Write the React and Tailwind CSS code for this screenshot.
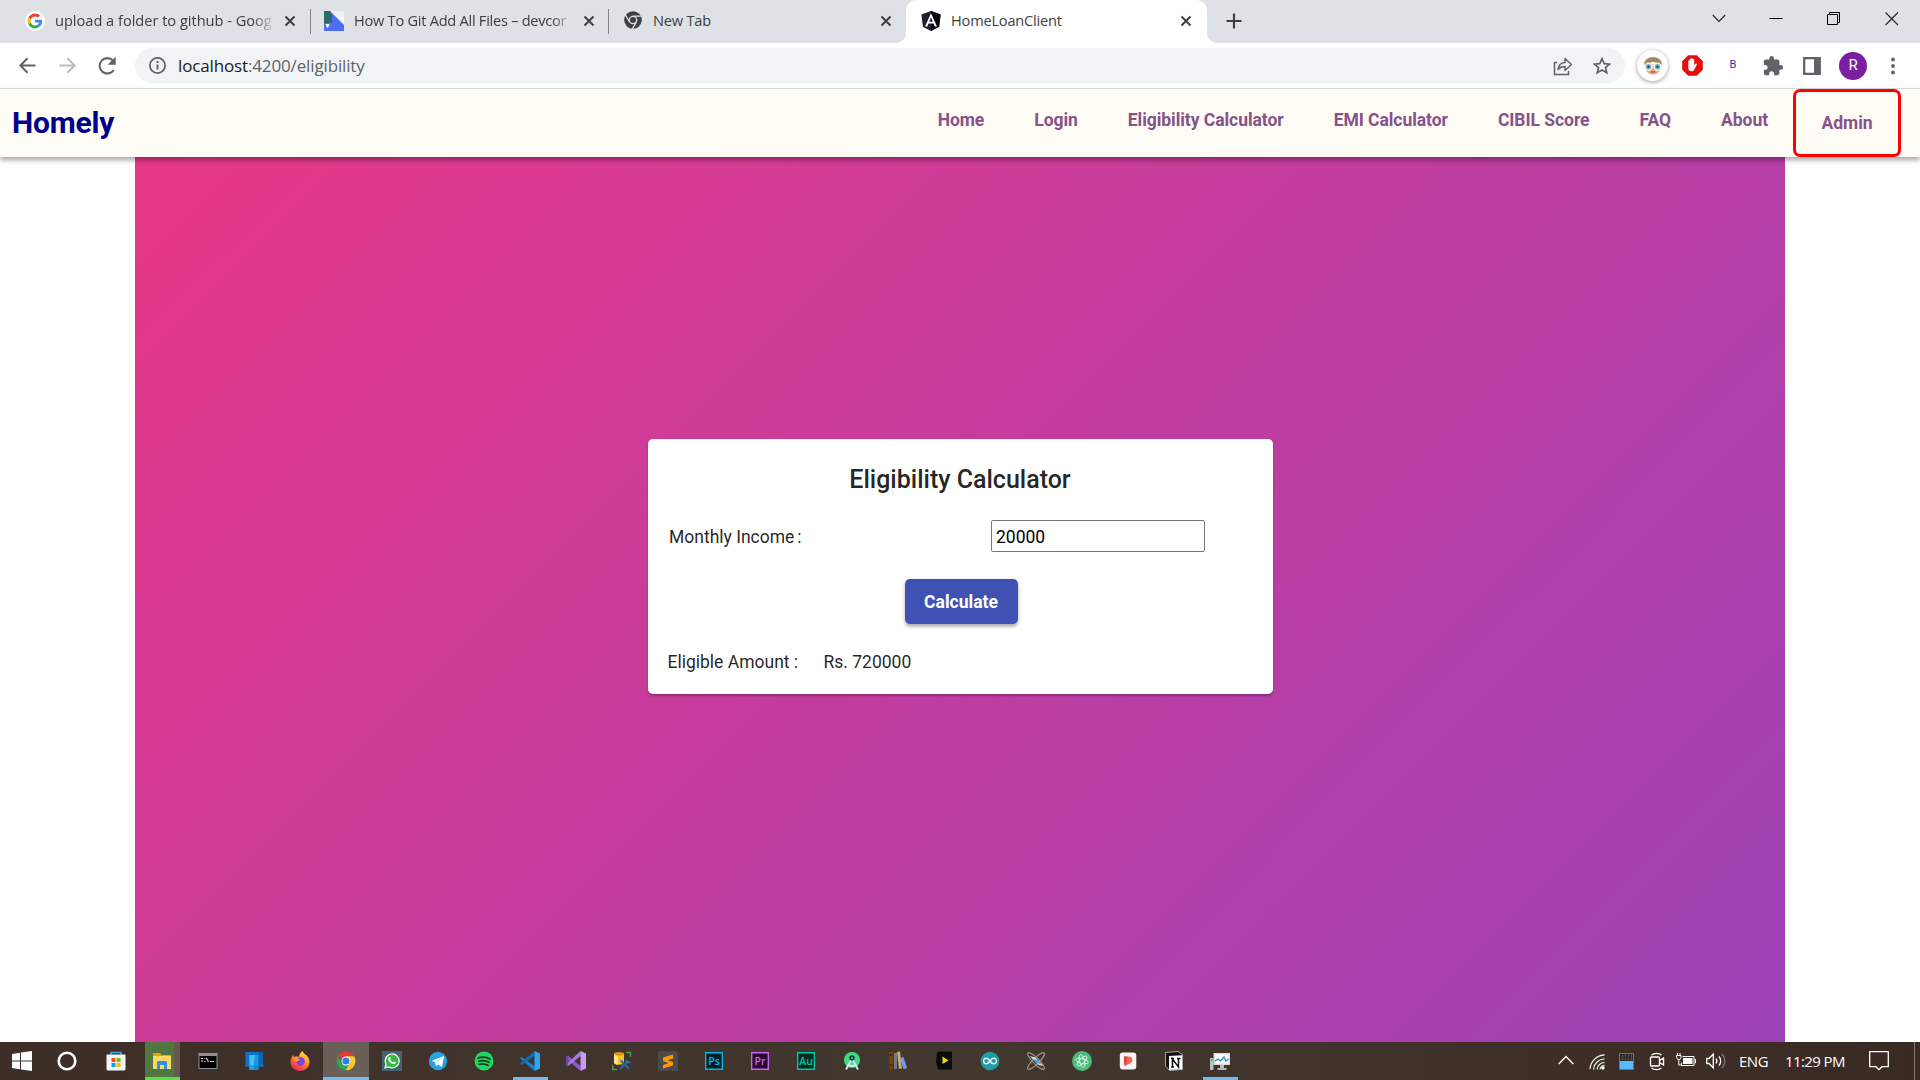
import React from "react";

const roboto = "font-[Roboto,sans-serif]";
const segoe = "font-['Open_Sans','Noto_Sans',sans-serif]";

function Svg({ w = 20, h = 20, vb, className = "", children, ...rest }) {
  return (
    <svg width={w} height={h} viewBox={vb || `0 0 ${w} ${h}`} fill="none" className={`shrink-0 ${className}`} {...rest}>
      {children}
    </svg>
  );
}

const CloseX = ({ className = "" }) => (
  <Svg w={12} h={12} className={className}>
    <path d="M1.5 1.5l9 9M10.5 1.5l-9 9" stroke="#3c4043" strokeWidth="2" />
  </Svg>
);

const GoogleG = () => (
  <Svg w={20} h={20}>
    <circle cx="10" cy="10" r="10" fill="#fff" />
    <g transform="translate(2.6 2.6) scale(.308)">
      <path fill="#EA4335" d="M24 9.5c3.54 0 6.71 1.22 9.21 3.6l6.85-6.85C35.9 2.38 30.47 0 24 0 14.62 0 6.51 5.38 2.56 13.22l7.98 6.19C12.43 13.72 17.74 9.5 24 9.5z" />
      <path fill="#4285F4" d="M46.98 24.55c0-1.57-.15-3.09-.38-4.55H24v9.02h12.94c-.58 2.96-2.26 5.48-4.78 7.18l7.73 6c4.51-4.18 7.09-10.36 7.09-17.65z" />
      <path fill="#FBBC05" d="M10.53 28.59c-.48-1.45-.76-2.99-.76-4.59s.27-3.14.76-4.59l-7.98-6.19C.92 16.46 0 20.12 0 24c0 3.88.92 7.54 2.56 10.78l7.97-6.19z" />
      <path fill="#34A853" d="M24 48c6.48 0 11.93-2.13 15.89-5.81l-7.73-6c-2.15 1.45-4.92 2.3-8.16 2.3-6.26 0-11.57-4.22-13.47-9.91l-7.98 6.19C6.51 42.62 14.62 48 24 48z" />
    </g>
  </Svg>
);

const DevFavicon = () => (
  <Svg w={20} h={20}>
    <path d="M0 0h20v20H0z" fill="#4c6ef5" />
    <path d="M6 0h14v14z" fill="#e9f3f1" />
    <path d="M14 6h6v5z" fill="#fff" />
    <path d="M0 0h6l2 4v8H0z" fill="#2b6b6b" />
    <path d="M1.5 13h4l-1 3-1 1-1-1z" fill="#fff" />
  </Svg>
);

const ChromeMono = () => (
  <Svg w={18} h={18}>
    <circle cx="9" cy="9" r="8.8" fill="#3c4043" />
    <circle cx="9" cy="9" r="3.7" fill="#3c4043" stroke="#dee1e6" strokeWidth="1.3" />
    <path d="M9 5.1h8.6M5.6 11L1.4 3.8M12.4 11L8.3 18" stroke="#dee1e6" strokeWidth="1.3" />
  </Svg>
);

const AngularIcon = () => (
  <Svg w={20} h={20}>
    <path d="M10 0l9.6 3.4-1.5 12.3L10 20l-8.1-4.3L.4 3.4z" fill="#1d1f2b" />
    <path d="M10 0l9.6 3.4-1.5 12.3L10 20z" fill="#05060d" />
    <path d="M10 2.2L4 15.6h2.3l1.2-3h5l1.2 3H16zm0 4.2l1.7 4.3H8.3z" fill="#fff" />
  </Svg>
);

function Tab({ icon, title, width, tracking, fade }) {
  return (
    <div className={`flex h-[43px] shrink-0 items-start pt-[11px] ${width}`}>
      <div className="flex w-5 justify-center">{icon}</div>
      <div className={`ml-[10px] h-5 w-[220px] whitespace-nowrap text-[14.6px] leading-[18px] text-[#3c4043] ${tracking} ${fade ? "[mask-image:linear-gradient(to_right,black_90%,transparent)]" : ""}`}>
        {title}
      </div>
      <CloseX className="mt-1 mr-[14px] ml-auto" />
    </div>
  );
}

function TabStrip() {
  return (
    <div className="flex h-[43px] bg-[#dee1e6] pl-[25px]">
      <Tab icon={<GoogleG />} title="upload a folder to github - Goog" width="w-[285px]" tracking="tracking-[-0.01px]" fade />
      <div className="mt-[9px] mr-[13px] h-[25px] w-px bg-[#808488]" />
      <Tab icon={<DevFavicon />} title="How To Git Add All Files – devcor" width="w-[285px]" tracking="tracking-[-0.26px]" fade />
      <div className="mt-[9px] mr-[14px] -ml-px h-[25px] w-px bg-[#808488]" />
      <Tab icon={<ChromeMono />} title="New Tab" width="w-[283px]" tracking="tracking-[-0.2px]" />
      <div className="-ml-[10px] h-[43px] w-[10px] bg-white">
        <div className="h-full rounded-br-[10px] bg-[#dee1e6]" />
      </div>
      <div className="w-[301px] rounded-t-[10px] bg-white pl-[15px]">
        <Tab icon={<AngularIcon />} title="HomeLoanClient" width="w-[285px]" tracking="tracking-[-0.2px]" />
      </div>
      <div className="h-[43px] w-[10px] bg-white">
        <div className="h-full rounded-bl-[10px] bg-[#dee1e6]" />
      </div>
      <Svg w={16} h={16} className="mt-[13px] ml-[9px]">
        <path d="M8 .5v15M.5 8h15" stroke="#3c4043" strokeWidth="2.2" />
      </Svg>
      <div className="mr-[21px] ml-auto flex items-start pt-3">
        <Svg w={14} h={14}><path d="M.8 3L7 9.500l6.200-6.500" stroke="#222" strokeWidth="1.1" /></Svg>
        <Svg w={14} h={14} className="ml-[43px]"><path d="M.5 6.500h13" stroke="#000" /></Svg>
        <Svg w={14} h={14} className="ml-11"><path d="M.5 2.500h10v10H.5zM2.500 2V.5h10v10H11" stroke="#000" /></Svg>
        <Svg w={14} h={14} className="ml-11"><path d="M.5 .5l12.500 12.500M13 .5L.5 13" stroke="#222" strokeWidth="1.1" /></Svg>
      </div>
    </div>
  );
}

function Toolbar() {
  return (
    <div className="flex h-[46px] items-center border-b border-[#d8dade] bg-white pr-[23px] pl-[19px]">
      <Svg w={17} h={17}><path d="M16.500 8.500H1.500M8.500 1.200L1.300 8.500l7.200 7.300" stroke="#5f6368" strokeWidth="2" /></Svg>
      <Svg w={17} h={17} className="ml-[23px]"><path d="M.5 8.500h15M8.500 1.200l7.200 7.300-7.200 7.300" stroke="#babcbe" strokeWidth="2" /></Svg>
      <Svg w={19} h={20} className="ml-[22px]">
        <path d="M15.800 14A7.700 7.700 0 1 1 15 4.600" stroke="#5f6368" strokeWidth="2.100" />
        <path d="M17.700 .7v8h-8z" fill="#5f6368" />
      </Svg>
      <div className="ml-[18px] flex h-[35px] w-[1490px] items-center rounded-full bg-[#f1f3f4] pr-[14px] pl-[14px]">
        <Svg w={17} h={17}>
          <circle cx="8.500" cy="8.500" r="7.600" stroke="#5f6368" strokeWidth="1.700" />
          <path d="M8.500 7.500v5M8.500 4v2" stroke="#5f6368" strokeWidth="1.900" />
        </Svg>
        <div className="ml-3 text-[17px] leading-6 tracking-[-0.14px] text-[#5f6368]">
          <span className="text-[#202124]">localhost</span>:4200/eligibility
        </div>
        <Svg w={20} h={20} className="ml-auto">
          <path d="M4 6.500H1.500v12h14V15" stroke="#5f6368" strokeWidth="1.500" />
          <path d="M5 13.500c.5-4.500 3-6.700 7-7V2.500l6.500 6-6.500 6v-4c-3 0-5.200.8-7 3z" stroke="#5f6368" strokeWidth="1.500" strokeLinejoin="round" />
        </Svg>
        <Svg w={18} h={18} className="ml-[20px]">
          <path d="M9 1.700l2.200 4.900 5.400.5-4.100 3.500 1.300 5.200L9 13l-4.800 2.800 1.300-5.200-4.100-3.500 5.400-.5z" stroke="#5f6368" strokeWidth="1.700" />
        </Svg>
      </div>
      <div className="ml-[12px] flex size-[31px] items-center justify-center rounded-full bg-white shadow-[0_1px_4px_rgba(0,0,0,0.4)]">
        <Svg w={20} h={20}>
          <path d="M1.500 8h17c0 6-3.500 10.500-8.500 10.500S1.500 14 1.500 8z" fill="#e5a47c" />
          <path d="M1 9C1 4 5 1 10 1s9 3 9 8l-3-1.500C12 7.500 11 5 9 6 6 7.500 4 8 1 9z" fill="#a8875c" />
          <path d="M0 9.500h20" stroke="#fff" strokeWidth="1.500" />
          <circle cx="5.500" cy="10.800" r="3.500" fill="#7db3c6" stroke="#eef4f6" strokeWidth="1.400" />
          <circle cx="14.500" cy="10.800" r="3.500" fill="#7db3c6" stroke="#eef4f6" strokeWidth="1.400" />
          <circle cx="5.500" cy="10.800" r="1.200" fill="#234a5a" /><circle cx="14.500" cy="10.800" r="1.200" fill="#234a5a" />
          <path d="M8 16h4" stroke="#a8503f" strokeWidth="1.200" />
        </Svg>
      </div>
      <Svg w={21} h={21} className="ml-[14px]">
        <path d="M6.200 .2h8.600l6 6v8.600l-6 6H6.200l-6-6V6.200z" fill="#e80c0c" />
        <path d="M6.300 11V6.300c0-1 1.300-1 1.300 0V4.500c0-1 1.500-1 1.500 0V3.700c0-1 1.600-1 1.600 0v.8c0-1 1.500-1 1.500 0v5.800l1.200-1.500c.9-.8 1.900 0 1.400.9l-2.600 5c-1.400 2.600-5.900 2-5.900-1.700z" fill="#fff" />
      </Svg>
      <div className={`ml-[21px] w-[18px] text-center text-[11px] text-[#2d2dbb] ${roboto}`}>B</div>
      <Svg w={22} h={22} vb="0 0 24 24" className="ml-[20px]">
        <path fill="#5f6368" d="M20.500 11H19V7c0-1.100-.9-2-2-2h-4V3.500a2.500 2.500 0 0 0-5 0V5H4c-1.100 0-1.990.9-1.990 2v3.800H3.500c1.490 0 2.700 1.210 2.700 2.700s-1.210 2.700-2.700 2.700H2V20c0 1.100.9 2 2 2h3.800v-1.500c0-1.490 1.210-2.700 2.700-2.700s2.700 1.210 2.700 2.700V22H17c1.100 0 2-.9 2-2v-4h1.500a2.500 2.500 0 0 0 0-5z" />
      </Svg>
      <Svg w={18} h={18} className="ml-[19px]">
        <path d="M1.200 1.200h15.600v15.600H1.200z" stroke="#5f6368" strokeWidth="2.200" />
        <path d="M11 1h6v16h-6z" fill="#5f6368" />
      </Svg>
      <div className={`ml-[18px] flex size-7 shrink-0 items-center justify-center rounded-full bg-[#7b1fa2] text-[15px] text-white ${roboto}`}>R</div>
      <Svg w={4} h={18} className="mr-[2px] ml-auto">
        <circle cx="2" cy="2.500" r="1.900" fill="#5f6368" /><circle cx="2" cy="9" r="1.900" fill="#5f6368" /><circle cx="2" cy="15.500" r="1.900" fill="#5f6368" />
      </Svg>
    </div>
  );
}

const navLinks = ["Home", "Login", "Eligibility Calculator", "EMI Calculator", "CIBIL Score", "FAQ", "About"];

function SiteNav() {
  return (
    <nav className={`relative z-10 flex h-[68px] bg-[#fffbf5] pr-[19px] pl-3 shadow-[0_3px_5px_rgba(0,0,0,0.35)] ${roboto}`}>
      <div className="pt-[14px] text-[30px] leading-10 font-bold tracking-[-0.2px] text-[#00008b]">Homely</div>
      <div className="ml-auto flex text-[17.5px] font-bold tracking-[-0.05px] text-[#865389]">
        {navLinks.map((label) => (
          <a key={label} className="px-[25px] pt-5 leading-[22px]">{label}</a>
        ))}
        <a className="flex h-[68px] w-[108px] justify-center rounded-[7px] border-[3px] border-[#ff0000] pt-5 leading-[22px]">Admin</a>
      </div>
    </nav>
  );
}

function EligibilityCard() {
  return (
    <div className="flex h-[255px] w-[625px] flex-col rounded-[5px] bg-white px-5 pt-5 text-[17.5px] text-black/87 shadow-[0_2px_2px_rgba(0,0,0,0.25)]">
      <h1 className="mt-1 text-center text-[25px] leading-[34px] font-medium">Eligibility Calculator</h1>
      <div className="mt-[23px] flex h-8 items-center">
        <label className="w-[323px] pt-0.5 pl-[1.5px]">Monthly Income<span className="ml-[3px]">:</span></label>
        <input readOnly value="20000" className="h-8 w-[214px] rounded-[2px] border border-[#767676] bg-white pt-0.5 pr-1 pl-[4.5px] text-black outline-none" />
      </div>
      <button className="mt-[27px] h-[45px] w-[113px] translate-x-px self-center rounded-[5px] bg-[#3f51b5] pt-0.5 font-bold tracking-[0.02px] text-white shadow-[0_3px_3px_rgba(0,0,0,0.22),0_1px_5px_rgba(0,0,0,0.15)]">Calculate</button>
      <div className="mt-[26px] flex leading-[24px]">
        <span className="w-[156px]">Eligible Amount :</span>
        <span>Rs. 720000</span>
      </div>
    </div>
  );
}

const AdobeIcon = ({ text, fg, bg }) => (
  <Svg w={18} h={18}>
    <path d="M.7 .7h16.600v16.600H.7z" fill={bg} stroke={fg} strokeWidth="1.400" />
    <text x="9" y="12.800" textAnchor="middle" fontFamily="Open Sans" fontSize="10.500" fontWeight="600" fill={fg}>{text}</text>
  </Svg>
);

const icons = {
  explorer: (
    <Svg>
      <path d="M1 2h7l1.500 2H19v4H1z" fill="#e59f12" />
      <path d="M1 5h18v13H1z" fill="#ffd766" />
      <path d="M5 18v-7a1 1 0 0 1 1-1h8a1 1 0 0 1 1 1v7h-3v-4H8v4z" fill="#2f8fe0" />
    </Svg>
  ),
  cmd: (
    <Svg>
      <path d="M.5 2h19v16H.5z" fill="#8f9294" />
      <path d="M1.500 5h17v12h-17z" fill="#000" />
      <path d="M3 7.500h2M3 10h2M7 7v1M7 10v1M8.500 7l2 4M12 10.500h4" stroke="#ddd" strokeWidth="1.100" />
    </Svg>
  ),
  laptop: (
    <Svg>
      <path d="M1.500 1h17.500v12.500l1 2H.5l1-2z" fill="#0f76c9" />
      <path d="M14 1h5v12.500h-5z" fill="#0b62ae" />
      <path d="M5.500 4h9v15h-9z" fill="#1b96e0" /><path d="M5.500 4h5.500l-1 6v9H5.500z" fill="#3fc0f5" />
      <path d="M5.500 14h9v5h-9z" fill="#0a86d0" opacity=".55" />
    </Svg>
  ),
  firefox: (
    <Svg>
      <defs>
        <linearGradient id="ff" x1="16" y1="1" x2="5" y2="19" gradientUnits="userSpaceOnUse">
          <stop stopColor="#ffe24a" /><stop offset=".45" stopColor="#ff8a22" /><stop offset="1" stopColor="#ef2155" />
        </linearGradient>
      </defs>
      <path d="M3 4l1 2c2-1 4-1 5 0 0-3 2-5 3.500-6 .5 3 6.500 4 7 10.500C19.500 16 15.500 20 10 20S.5 16 .5 11C.5 8 2 5.500 3 4z" fill="url(#ff)" />
      <circle cx="10.500" cy="10.500" r="4.300" fill="#7a44d8" />
      <path d="M3.500 7c3-.7 5 .8 7 1.500-1.500 1.300-3 1-4 2.500-1 0-2.500-2-3-4z" fill="#ff9a2a" />
    </Svg>
  ),
  chrome: (
    <Svg>
      <path d="M10 10L1.900 5.300A9.300 9.300 0 0 1 18.100 5.300H10z" fill="#e33b2e" />
      <path d="M10 10l-4.100 2.400L1.900 5.300A9.300 9.300 0 0 0 9.500 19.300L13.600 12z" fill="#2da94f" />
      <path d="M10 5.300h8.100A9.300 9.300 0 0 1 9.500 19.300L14 12z" fill="#fdc727" />
      <circle cx="10" cy="10" r="4.500" fill="#fff" /><circle cx="10" cy="10" r="3.600" fill="#2f7cf0" />
    </Svg>
  ),
  whatsapp: (
    <Svg>
      <path d="M0 0h20v20H0z" fill="#47626d" />
      <path d="M3 17l1-3.700A7 7 0 1 1 6.700 16z" fill="#35b944" stroke="#fff" strokeWidth="1.200" />
      <path d="M7 6.200c.8-.8 1.500.1 1.800 1.400l-.7 1c.8 1.500 1.600 2.200 3 2.800l1-1c1.600.5 2.100 1 1.400 1.900-1.700 1.700-4 .5-5.600-1.200C6.200 9.300 5.700 7.700 7 6.200z" fill="#fff" />
    </Svg>
  ),
  telegram: (
    <Svg>
      <circle cx="10" cy="10" r="9.200" fill="#2aa1da" />
      <path d="M3.800 9.800l11.400-4.500c.6-.2 1 .1.800.8l-1.900 9c-.1.600-.6.800-1.100.4l-2.900-2.100-1.500 1.400c-.5.300-.8.100-.9-.4l-.7-3z" fill="#fff" />
      <path d="M7.500 12l6-5" stroke="#9ccbe4" />
    </Svg>
  ),
  spotify: (
    <Svg>
      <circle cx="10" cy="10" r="9.500" fill="#1ed760" />
      <path d="M4 7c4.500-1.300 8.500-1 12 1M4.700 10.300c3.500-1 7-.7 10.200 1M5.300 13.300c3-.8 6-.5 8.700 1" stroke="#16301e" strokeWidth="1.700" strokeLinecap="round" />
    </Svg>
  ),
  vscode: (
    <Svg>
      <path d="M1.500 6L0 7.200 14.500 20V15z" fill="#0f86d2" />
      <path d="M1.500 14L0 12.800 14.500 0v5z" fill="#0870b5" />
      <path d="M14.500 0L20 2.500v15L14.500 20z" fill="#29a9f4" />
    </Svg>
  ),
  vstudio: (
    <Svg>
      <path d="M0 5.500L2 4.700 14.500 15v5L2.500 9.500V12l-2.500 2z" fill="#8a5bc8" />
      <path d="M0 14.500l2 .8L14.500 5V0L4 9.700 0 14.500z" fill="#a779df" />
      <path d="M0 5.500L2.200 4.700v10.600L0 14.500z" fill="#6b469f" />
      <path d="M14.500 0L20 2.500v15L14.500 20z" fill="#c79cf8" />
    </Svg>
  ),
  sql: (
    <Svg>
      <path d="M2 2.500v9c0 3 10 3 10 0v-9z" fill="#f8c320" /><path d="M2 2.500v9c0 1.500 2 2 4 2.200V3z" fill="#ffe680" />
      <ellipse cx="7" cy="2.800" rx="5" ry="1.900" fill="#e0951d" />
      <path d="M14 1.500h4.500V6M.8 14v4.500H5" stroke="#4a9b45" strokeWidth="1.500" />
      <path d="M8 18l8-8M9.500 10.500l7.500 7" stroke="#2468a8" strokeWidth="2.200" />
      <path d="M14 9.500l2 2 2.500-.5M8 10l3 0" stroke="#2d7abd" strokeWidth="1.700" />
    </Svg>
  ),
  sublime: (
    <Svg>
      <rect width="20" height="20" rx="1.500" fill="#4b4b4b" />
      <path d="M5 6.500l10-3v4l-5.500 1.700L15 11v3.500l-10 3V14l5.500-2L5 10z" fill="#ff9800" />
    </Svg>
  ),
  ps: <AdobeIcon text="Ps" fg="#00b8e6" bg="#001d26" />,
  pr: <AdobeIcon text="Pr" fg="#c268e8" bg="#2a0634" />,
  au: <AdobeIcon text="Au" fg="#00c8a0" bg="#002b24" />,
  android: (
    <Svg>
      <circle cx="10" cy="9" r="8" fill="#3ddc84" />
      <circle cx="10" cy="7" r="2.700" fill="#17333f" /><circle cx="10" cy="7" r="1" fill="#3ddc84" />
      <path d="M9 9.500L4 18.500M11 9.500l5 9M5.500 13.500c3 2 6 2 9 0" stroke="#dbe8f0" strokeWidth="1.900" />
    </Svg>
  ),
  books: (
    <Svg>
      <path d="M1 1h4v17H1z" fill="#7a3f12" /><path d="M1 4h4M1 14h4" stroke="#3d1d05" />
      <path d="M6 2h3v16H6z" fill="#66808a" /><path d="M9 1l3-.5 2 17-3 .5z" fill="#d3a862" />
      <path d="M12 7l3.500-1 3.500 11-3.500 1.200z" fill="#6d9bef" />
    </Svg>
  ),
  player: (
    <Svg>
      <path d="M3 2l2-1.500h13v18H4L3 14 2 11z" fill="#0b0b0b" />
      <path d="M8.500 5.500l6 4-6 3.500z" fill="#f1dc00" />
    </Svg>
  ),
  arduino: (
    <Svg>
      <circle cx="10" cy="10" r="9.300" fill="#1f9ca4" />
      <path d="M10 10C8.500 7.800 7.500 7.200 6.300 7.200a2.800 2.800 0 1 0 0 5.600C7.500 12.800 8.500 12.200 10 10s2.500-2.800 3.700-2.800a2.800 2.800 0 1 1 0 5.600C12.500 12.800 11.500 12.200 10 10z" stroke="#e6f5f5" strokeWidth="1.500" />
    </Svg>
  ),
  orbit: (
    <Svg>
      <ellipse cx="10" cy="10" rx="11.500" ry="3" transform="rotate(45 10 10)" stroke="#9b9287" strokeWidth="1.200" />
      <ellipse cx="10" cy="10" rx="11.500" ry="3" transform="rotate(-45 10 10)" stroke="#9b9287" strokeWidth="1.200" />
      <path d="M3.500 5l6 1.500 8 8.500-5-1z" fill="#c9dced" /><path d="M7 8l5 1 3 4-5-1z" fill="#5f9ccc" />
    </Svg>
  ),
  atom: (
    <Svg>
      <circle cx="10" cy="10" r="9.900" fill="#4dbb7c" />
      <g stroke="#e3fff0" strokeWidth=".8">
        <ellipse cx="10" cy="10" rx="6.500" ry="2.400" transform="rotate(15 10 10)" />
        <ellipse cx="10" cy="10" rx="6.500" ry="2.400" transform="rotate(75 10 10)" />
        <ellipse cx="10" cy="10" rx="6.500" ry="2.400" transform="rotate(-45 10 10)" />
      </g>
    </Svg>
  ),
  pcard: (
    <Svg>
      <rect x="1.800" y="1.500" width="16.500" height="17" rx="3" fill="#f8f4f3" />
      <path d="M6 5.500h4.500c5.500 0 5 7 0 7.500L7.500 15 6 14z" fill="#ef6a55" /><path d="M6 5.500h3v6L6 14z" fill="#d94943" />
    </Svg>
  ),
  notion: (
    <Svg>
      <path d="M1.500 1.500L14 .5l4.500 3v15l-13 1L1.500 15z" fill="#111" stroke="#ddd" strokeWidth=".7" />
      <path d="M5 5l13-.8v14L5 19z" fill="#fff" />
      <path d="M8.500 16V8l6 8V8M7 7.500h3M13 7.500h3.500M7 16h3" stroke="#111" strokeWidth="1.500" />
    </Svg>
  ),
  monitor: (
    <Svg>
      <path d="M0 7h3.500v12H0z" fill="#bcbcbc" /><path d="M.7 8h2v2h-2z" fill="#24e22c" />
      <path d="M3.500 2h16.500v12H3.500z" fill="#d9dde0" /><path d="M5 3.500h13.500v9H5z" fill="#fff" />
      <path d="M5 10l3-2 2.500 2L14 6l2 4 2.500-2" stroke="#1c88c7" strokeWidth="1.200" />
      <path d="M10 14h4v3h2.500v2h-9v-2H10z" fill="#b5b9bc" />
    </Svg>
  ),
};

const apps = ["cmd", "laptop", "firefox", "chrome", "whatsapp", "telegram", "spotify", "vscode", "vstudio", "sql", "sublime", "ps", "pr", "au", "android", "books", "player", "arduino", "orbit", "atom", "pcard", "notion", "monitor"];

function Taskbar() {
  return (
    <div className="flex h-[38px] bg-linear-to-r from-[#3d2e27] via-[#42382f] to-[#3a2a24] text-white">
      <div className="flex w-11 items-center justify-center">
        <Svg>
          <path d="M0 3l8-1.200v7.700H0zM9 1.600L20 0v9.500H9zM0 10.500h8v7.700L0 17zM9 10.500h11V20L9 18.400z" fill="#fff" />
        </Svg>
      </div>
      <div className="flex w-[46px] items-center justify-center">
        <Svg><circle cx="10" cy="10" r="8.300" stroke="#fff" strokeWidth="2.600" /></Svg>
      </div>
      <div className="flex w-[51px] items-center justify-center">
        <Svg>
          <path d="M5 4V1.500h10V4" stroke="#2bb1e8" strokeWidth="1.500" />
          <path d="M.5 3.500h19V18a1.500 1.500 0 0 1-1.500 1.500H2A1.500 1.500 0 0 1 .5 18z" fill="#f4f4f4" />
          <path d="M5.500 7h4v4h-4z" fill="#f04e23" /><path d="M10.500 7h4v4h-4z" fill="#7fba00" />
          <path d="M5.500 12h4v4h-4z" fill="#00a4ef" /><path d="M10.500 12h4v4h-4z" fill="#ffb900" />
        </Svg>
      </div>
      <div className="ml-1 flex w-[35px] items-center justify-center border-b-[3px] border-[#58e045] bg-linear-to-r from-[#52763f] from-83% to-[#665850] to-83% pt-[3px] pr-px">
        {icons.explorer}
      </div>
      <div className="ml-[5px] flex">
        {apps.map((name) => (
          <div
            key={name}
            className={
              "flex w-[46px] items-center justify-center " +
              (name === "chrome" ? "border-b-[3px] border-[#76b9ed] bg-[#6a5f58] pt-[3px]" : "")
            }
          >
            {name === "vscode" || name === "monitor" ? (
              <div className="flex h-full w-[35px] items-center justify-center border-b-[3px] border-[#76b9ed] pt-[3px]">{icons[name]}</div>
            ) : (
              icons[name]
            )}
          </div>
        ))}
      </div>
      <div className={`ml-auto flex items-center ${segoe}`}>
        <Svg w={16} h={20}><path d="M.7 13L8 5.500l7.300 7.500" stroke="#fff" strokeWidth="1.400" /></Svg>
        <Svg w={16} h={18} className="ml-[15px]">
          <path d="M1 17A15 15 0 0 1 15.500 3M4.500 17.500A11.500 11.500 0 0 1 15.500 6.800M8 17.500a8 8 0 0 1 7.500-7.200M11 17.500c.3-2 2-3.700 4.500-4" stroke="#e8e5e3" strokeWidth="1.300" />
          <circle cx="14" cy="16" r="1.700" fill="#fff" />
        </Svg>
        <Svg w={15} h={17} className="ml-[14px]">
          <path d="M.5 .5h14v16H.5z" fill="#222" stroke="#77706b" />
          <path d="M3.500 1v7M6.500 1v7M9.500 1v7M12.500 1v7M1 3h13M1 6h13" stroke="#55504c" strokeWidth=".8" />
          <path d="M1 8h13v8H1z" fill="#58b9ff" />
        </Svg>
        <Svg w={16} h={19} className="ml-[15px]">
          <path d="M2.500 3C5 .8 10 .8 12.500 3M2.500 16c2.500 2.200 7.500 2.200 10 0" stroke="#fff" strokeWidth="1.200" />
          <path d="M2.500 5h7a1 1 0 0 1 1 1v7a1 1 0 0 1-1 1h-7a1 1 0 0 1-1-1V6a1 1 0 0 1 1-1zM10.500 8.500L14.500 6v7l-4-2.500" stroke="#fff" strokeWidth="1.400" />
        </Svg>
        <Svg w={20} h={16} className="ml-[11px]">
          <path d="M6.500 3.500h11.500v9H5.500v-3M18.500 6.500h1v3.500h-1" stroke="#fff" strokeWidth="1" />
          <path d="M7 5h9.500v6H7z" fill="#fff" />
          <path d="M1.500 0v3M4 0v3" stroke="#fff" strokeWidth="1" />
          <path d="M.5 2.500h4.500v2L3.800 6.500H1.800L.5 4.500zM2.800 6.500V12h3" stroke="#fff" strokeWidth="1" />
        </Svg>
        <Svg w={21} h={18} className="ml-[10px]">
          <path d="M.7 6.500H3L7.300 2v14L3 11.500H.7z" stroke="#fff" strokeWidth="1.300" />
          <path d="M10 6.500c1 1.500 1 3.500 0 5M13 4.500c2.200 2.500 2.200 6.500 0 9" stroke="#fff" strokeWidth="1.300" />
          <path d="M16 2c3.700 4 3.700 10 0 14" stroke="#857b75" strokeWidth="1.300" />
        </Svg>
        <span className="ml-3 w-[30px] text-[15px] leading-5 tracking-[-0.5px] whitespace-nowrap">ENG</span>
        <span className="ml-4 w-[60px] text-[15px] leading-5 tracking-[-0.6px] whitespace-nowrap">11:29 PM</span>
        <Svg w={20} h={20} className="ml-[24px]">
          <path d="M.7 .7h18.600v15H13l-3 3-3-3H.7z" stroke="#fff" strokeWidth="1.300" />
        </Svg>
        <div className="mr-[5px] ml-[25px] h-full w-px bg-[#85786f]" />
      </div>
    </div>
  );
}

export default function App() {
  return (
    <div className={`flex h-[1080px] w-[1920px] flex-col overflow-hidden bg-white ${segoe}`}>
      <TabStrip />
      <Toolbar />
      <SiteNav />
      <main className={`mx-[135px] flex h-[885px] justify-center bg-[linear-gradient(135deg,#e73888,#9c42b6)] pt-[282px] ${roboto}`}>
        <EligibilityCard />
      </main>
      <Taskbar />
    </div>
  );
}
